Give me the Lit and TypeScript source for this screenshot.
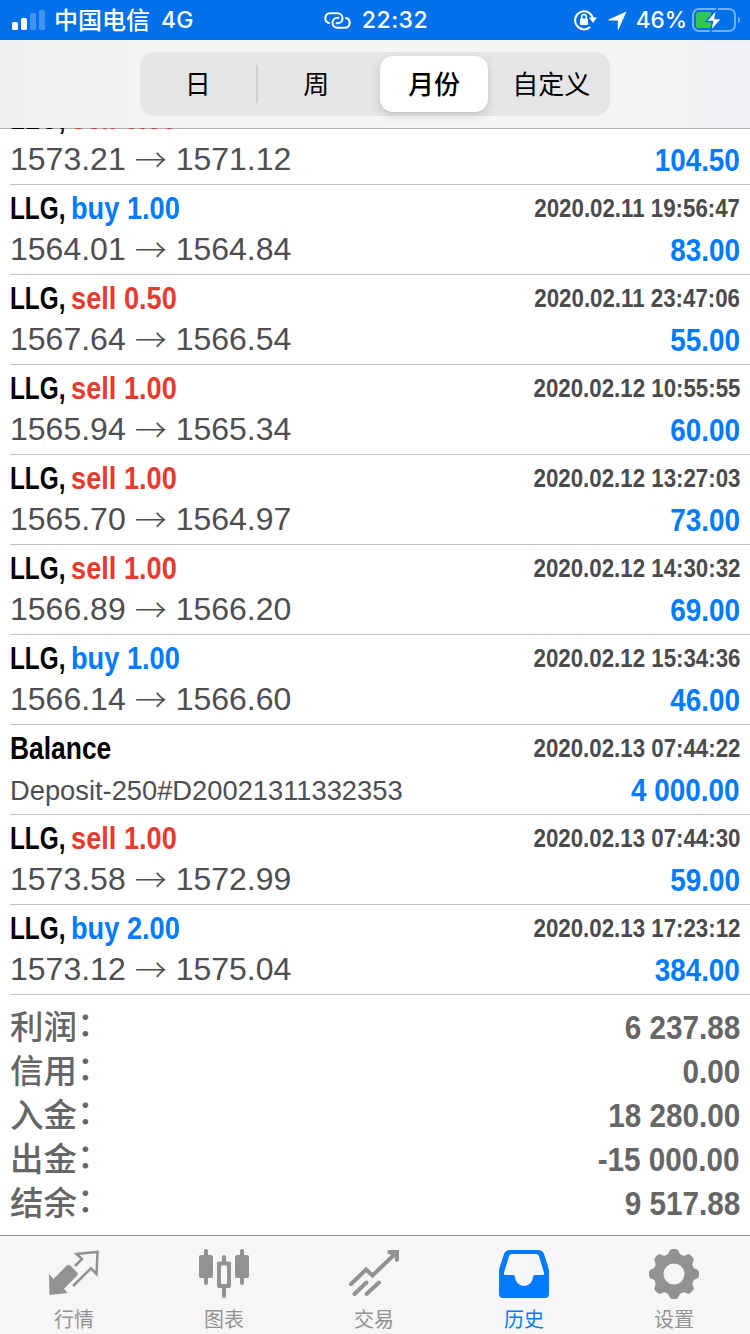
import { LitElement, html, css, svg, nothing } from "lit";
import { customElement } from "lit/decorators.js";
import { classMap } from "lit/directives/class-map.js";

interface Deal {
  side?: "buy" | "sell";
  volume?: string;
  time: string;
  from?: string;
  to?: string;
  comment?: string;
  profit: string;
}

const deals: Deal[] = [
  { side: "sell", volume: "0.50", time: "", from: "1573.21", to: "1571.12", profit: "104.50" },
  { side: "buy", volume: "1.00", time: "2020.02.11 19:56:47", from: "1564.01", to: "1564.84", profit: "83.00" },
  { side: "sell", volume: "0.50", time: "2020.02.11 23:47:06", from: "1567.64", to: "1566.54", profit: "55.00" },
  { side: "sell", volume: "1.00", time: "2020.02.12 10:55:55", from: "1565.94", to: "1565.34", profit: "60.00" },
  { side: "sell", volume: "1.00", time: "2020.02.12 13:27:03", from: "1565.70", to: "1564.97", profit: "73.00" },
  { side: "sell", volume: "1.00", time: "2020.02.12 14:30:32", from: "1566.89", to: "1566.20", profit: "69.00" },
  { side: "buy", volume: "1.00", time: "2020.02.12 15:34:36", from: "1566.14", to: "1566.60", profit: "46.00" },
  { time: "2020.02.13 07:44:22", comment: "Deposit-250#D20021311332353", profit: "4 000.00" },
  { side: "sell", volume: "1.00", time: "2020.02.13 07:44:30", from: "1573.58", to: "1572.99", profit: "59.00" },
  { side: "buy", volume: "2.00", time: "2020.02.13 17:23:12", from: "1573.12", to: "1575.04", profit: "384.00" },
];

const totals = [
  ["利润", "6 237.88"],
  ["信用", "0.00"],
  ["入金", "18 280.00"],
  ["出金", "-15 000.00"],
  ["结余", "9 517.88"],
];

const gearTeeth = [0, 45, 90, 135, 180, 225, 270, 315];

const tabs = [
  {
    label: "行情",
    icon: svg`<path fill="currentColor" d="M0 25 L4.500 30 L17.500 16.800 Q19.500 15 21.500 16.800 L28 23.200 Q29.600 25 28 26.800 L15 39.700 L18.500 44 L0.500 46 Z"/>
      <path fill="none" stroke="currentColor" stroke-width="2.500" stroke-linejoin="miter" d="M26 17 L33 10 L27.500 5 L48.500 3 L47.500 25 L42 19.300 L24 37"/>`,
  },
  {
    label: "图表",
    icon: svg`<g fill="currentColor"><rect x="0" y="6" width="14" height="23" rx="2"/><rect x="5" y="0" width="4" height="36" rx="2"/>
      <rect x="36" y="6" width="14" height="23" rx="2"/><rect x="41" y="0" width="4" height="36" rx="2"/>
      <rect x="23" y="6" width="4" height="9" rx="2"/><rect x="23" y="37" width="4" height="12" rx="2"/></g>
      <rect x="20" y="14.500" width="10" height="22.500" fill="none" stroke="currentColor" stroke-width="4" stroke-linejoin="round"/>`,
  },
  {
    label: "交易",
    icon: svg`<g fill="none" stroke="currentColor" stroke-width="4" stroke-linecap="round"><path d="M2 35 L17 20.500 L23.500 26.500 L46 5"/><path d="M5.500 45 L17.500 33.500"/><path d="M17.500 45 L30 33.500"/></g>
      <path fill="currentColor" d="M39.500 1 H50 V12 Q48 13.500 46 12 L45.500 7 L39.500 5 Q37 3 39.500 1 Z"/>`,
  },
  {
    label: "历史",
    active: true,
    icon: svg`<path fill="currentColor" fill-rule="evenodd" d="M11 1 H39 Q43.500 1 45 5 L49.200 18 Q50 20.500 50 23 V45 Q50 49 46 49 H4 Q0 49 0 45 V23 Q0 20.500 0.800 18 L5 5 Q6.500 1 11 1 Z M13 5 Q10.800 5 10 7.200 L5 23.500 Q4.500 26 6 26 H14 Q16 26 16 28 A9 9 0 0 0 34 28 Q34 26 36 26 H44 Q45.500 26 45 23.500 L40 7.200 Q39.200 5 37 5 Z"/>`,
  },
  {
    label: "设置",
    icon: svg`<circle cx="25" cy="25" r="15.500" fill="none" stroke="currentColor" stroke-width="10"/>
      ${gearTeeth.map(
        (a) => svg`<path transform="rotate(${a} 25 25)" fill="currentColor" d="M17.500 7 Q19.500 5 20.300 2.500 Q21 0 23.500 0 H26.500 Q29 0 29.700 2.500 Q30.500 5 32.500 7 L30 10 H20 Z"/>`
      )}`,
  },
];

@customElement("status-bar")
class StatusBar extends LitElement {
  static styles = css`
    :host { display: grid; grid-template-columns: 1fr auto 1fr; align-items: center; height: 40px; padding: 0 10px 0 12px; box-sizing: border-box;
      background: #0270e8; color: #fff; font: 500 23px/40px Inter, "Noto Sans CJK SC", sans-serif; letter-spacing: 0.5px; }
    .side, .mid { display: flex; align-items: center; }
    .carrier { font-size: 24px; line-height: 36px; height: 39px; font-weight: 500; letter-spacing: 0; margin-left: 9px; font-family: "Noto Sans CJK SC", sans-serif; }
    .net { margin-left: 11px; letter-spacing: 0.2px; font-weight: 500; }
    .link { margin-right: 11px; }
    .end { justify-content: flex-end; }
    .lock { margin-right: 11px; }
    .arrow { margin-right: 9px; }
    .charge { font-size: 22.500px; letter-spacing: 0; }
    .battery { margin-left: 5px; }
    svg { display: block; }
  `;
  render() {
    return html`
      <div class="side">
        <svg width="33" height="20" viewBox="0 0 33 20" fill="#fff">
          <rect x="0" y="12" width="6" height="8" rx="1.500"/><rect x="9" y="8" width="6" height="12" rx="1.500"/>
          <rect x="18" y="3" width="6" height="17" rx="1.500" opacity=".25"/><rect x="27" y="0" width="6" height="20" rx="1.500" opacity=".25"/>
        </svg>
        <span class="carrier">中国电信</span><span class="net">4G</span>
      </div>
      <div class="mid">
        <svg class="link" width="27" height="17" viewBox="0 0 27 17" fill="none" stroke="#fff" stroke-width="2" stroke-linecap="round">
          <path d="M5 11 A5 5 0 0 1 6 1.200 H13.500 A5 5 0 0 1 13.500 11.200 H12.500"/>
          <path d="M22 6 A5 5 0 0 1 21 15.800 H13.500 A5 5 0 0 1 13.500 5.800 H14.500"/>
        </svg>
        <span>22:32</span>
      </div>
      <div class="side end">
        <svg class="lock" width="23" height="22" viewBox="0 0 23 22">
          <path d="M16.200 18 A9 9 0 1 1 19 10" fill="none" stroke="#fff" stroke-width="2"/>
          <path d="M15 8.500 H23 L19 14 Z" fill="#fff"/>
          <rect x="6" y="9.500" width="8" height="6.500" rx="1" fill="#fff"/>
          <path d="M7.700 10 V7.800 a2.300 2.300 0 0 1 4.600 0 V10" fill="none" stroke="#fff" stroke-width="1.500"/>
        </svg>
        <svg class="arrow" width="19" height="19" viewBox="0 0 19 19"><path d="M18.500 .5 L10.500 18.500 Q10 19 9.800 18.300 V9.500 H.8 Q0 9 .6 8.500 Z" fill="#fff"/></svg>
        <span class="charge">46%</span>
        <svg class="battery" width="48" height="24" viewBox="0 0 48 24">
          <rect x="1" y="1" width="42" height="22" rx="6" fill="none" stroke="#fff" stroke-opacity=".45" stroke-width="2"/>
          <path d="M46 8.500 Q48 9.500 48 12 T46 15.500 Z" fill="#fff" opacity=".45"/>
          <path d="M6.500 4 H19 V20 H6.500 Q4 20 4 17.500 V6.500 Q4 4 6.500 4 Z" fill="#32c84f"/>
          <path d="M25 1 L14 13.500 H20.500 L18.500 23.500 L30 10.500 H23 Z" fill="#fff" stroke="#0270e8" stroke-width="1.500"/>
        </svg>
      </div>`;
  }
}

@customElement("period-switch")
class PeriodSwitch extends LitElement {
  static styles = css`
    :host { display: flex; flex: none; justify-content: center; height: 89px; box-sizing: border-box; padding-top: 12px; border-bottom: 1px solid #b0b0b2;
      background: linear-gradient(90deg, #f0f0ef, #f6f5f5 28%, #f5f5f6 75%, #f1f2f5); }
    .track { display: grid; grid-template-columns: repeat(4, 1fr); width: 470px; height: 64px; box-sizing: border-box; padding: 4px 0 4px 0; border-radius: 15px; background: #e5e4e6; }
    .seg { display: flex; align-items: center; justify-content: center; padding-bottom: 3px; font: 400 26px/1 "Noto Sans CJK SC", sans-serif; color: #000; }
    .first { border-right: 2px solid #d0cfd2; border-image: linear-gradient(transparent 18%, #d0cfd2 18%, #d0cfd2 82%, transparent 82%) 1; }
    .on { margin: 0 4.500px 0 5px; background: #fff; border-radius: 13px; font-weight: 500; box-shadow: 0 4px 10px rgba(0, 0, 0, 0.13), 0 1px 2px rgba(0, 0, 0, 0.05); }
  `;
  render() {
    return html`<div class="track">
      ${["日", "周", "月份", "自定义"].map(
        (t, i) => html`<div class=${classMap({ seg: true, first: i === 0, on: i === 2 })}>${t}</div>`
      )}
    </div>`;
  }
}

@customElement("deal-row")
class DealRow extends LitElement {
  static properties = { deal: { attribute: false } };
  declare deal: Deal;
  static styles = css`
    :host { display: block; flex: none; height: 90px; box-sizing: border-box; margin-left: 10px; padding-right: 10px; border-bottom: 1px solid #c0c0c2; font-family: "Liberation Sans", Arial, sans-serif; white-space: nowrap; }
    .line { display: flex; justify-content: space-between; align-items: flex-start; }
    .top { height: 46px; line-height: 46px; }
    .title { display: flex; font-size: 32px; font-weight: 700; color: #000; }
    .symbol, .deal { transform-origin: 0 50%; }
    .symbol { width: 61px; transform: scaleX(0.76); }
    .deal { transform: scaleX(0.85); }
    .balance { transform: scaleX(0.825); transform-origin: 0 50%; }
    .buy { color: #007aff; }
    .sell { color: #e63b2e; }
    .time { font-size: 26px; font-weight: 700; color: #4b4b4d; transform: scaleX(0.857); transform-origin: 100% 50%; }
    .prices { display: flex; gap: 9px; font-size: 32px; line-height: 36px; color: #4e4e50; }
    .arrow { width: 32px; line-height: 34px; text-align: center; font-family: "Noto Sans CJK SC", sans-serif; font-weight: 300; }
    .comment { font-size: 27.300px; line-height: 39px; color: #4e4e50; }
    .profit { font-size: 32px; line-height: 38px; font-weight: 700; color: #007aff; transform: scaleX(0.871); transform-origin: 100% 50%; }
  `;
  render() {
    const d = this.deal;
    return html`
      <div class="line top">
        <div class="title">
          ${d.side
            ? html`<span class="symbol">LLG,</span><span class=${classMap({ deal: true, [d.side]: true })}>${d.side} ${d.volume}</span>`
            : html`<span class="balance">Balance</span>`}
        </div>
        ${d.time ? html`<div class="time">${d.time}</div>` : nothing}
      </div>
      <div class="line">
        ${d.comment
          ? html`<div class="comment">${d.comment}</div>`
          : html`<div class="prices"><span>${d.from}</span><span class="arrow">→</span><span>${d.to}</span></div>`}
        <div class="profit">${d.profit}</div>
      </div>`;
  }
}

@customElement("tab-bar")
class TabBar extends LitElement {
  static styles = css`
    :host { display: grid; flex: none; grid-template-columns: repeat(5, 1fr); height: 99px; box-sizing: border-box; border-top: 1px solid #8f8f91; background: #f6f6f6; }
    .tab { display: flex; flex-direction: column; align-items: center; padding: 13px 2px 0 0; color: #929292; }
    .active { color: #007aff; }
    svg { display: block; overflow: visible; }
    .label { margin-top: 6px; font: 400 20px/28px "Noto Sans CJK SC", sans-serif; }
  `;
  render() {
    return html`${tabs.map(
      (t) => html`<div class=${classMap({ tab: true, active: !!t.active })}>
        <svg width="50" height="50" viewBox="0 0 50 50">${t.icon}</svg>
        <span class="label">${t.label}</span>
      </div>`
    )}`;
  }
}

@customElement("app-root")
class AppRoot extends LitElement {
  static styles = css`
    :host { display: flex; flex-direction: column; width: 750px; height: 1334px; overflow: hidden; background: #fff; }
    status-bar { flex: none; }
    .content { flex: 1; min-height: 0; margin-top: -1px; overflow: hidden; display: flex; flex-direction: column; }
    .list { display: flex; flex-direction: column; margin-top: -33px; }
    .totals { padding: 10px 10px 0; }
    .total { display: flex; justify-content: space-between; height: 44px; color: #666; }
    .name { display: flex; font: 500 33.500px/40px "Noto Sans CJK SC", sans-serif; }
    .colon { line-height: 33px; }
    .value { font: 700 34px/44px "Liberation Sans", Arial, sans-serif; transform: scaleX(0.873); transform-origin: 100% 50%; }
  `;
  render() {
    return html`
      <status-bar></status-bar>
      <period-switch></period-switch>
      <div class="content">
        <div class="list">${deals.map((d) => html`<deal-row .deal=${d}></deal-row>`)}</div>
        <div class="totals">
          ${totals.map(([n, v]) => html`<div class="total"><span class="name">${n}<span class="colon">：</span></span><span class="value">${v}</span></div>`)}
        </div>
      </div>
      <tab-bar></tab-bar>`;
  }
}
